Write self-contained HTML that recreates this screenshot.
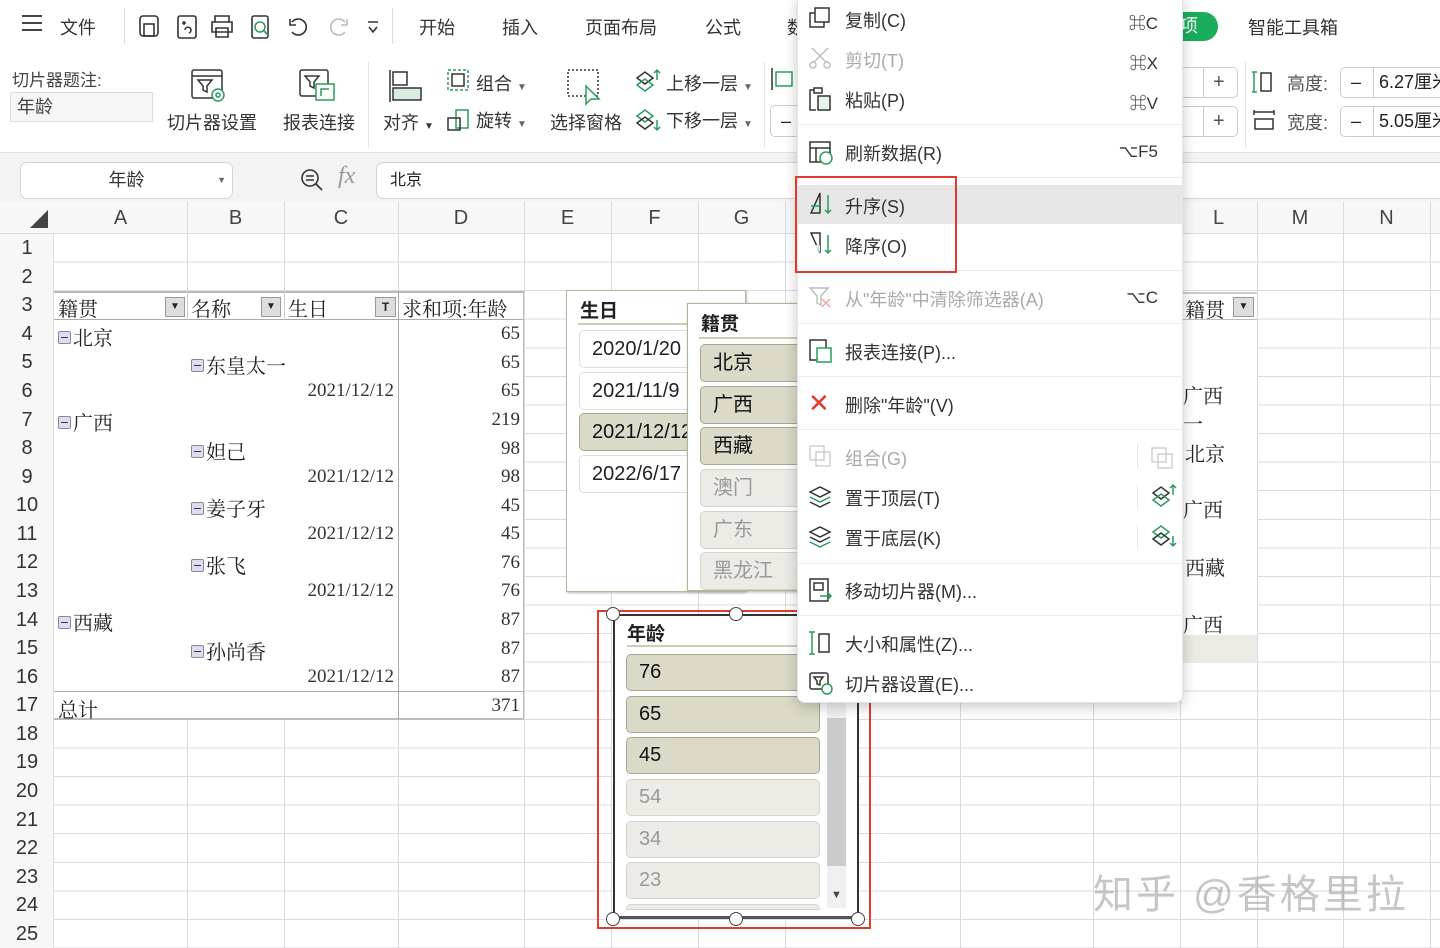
<!DOCTYPE html>
<html><head><meta charset="utf-8"><style>
*{margin:0;padding:0;box-sizing:border-box}
body{width:1440px;height:948px;overflow:hidden;position:relative;background:#fff;font-family:"Liberation Sans","Noto Sans CJK SC",sans-serif;color:#222}
.a{position:absolute;white-space:nowrap}
.t{font-size:18px;color:#333}
.grid{position:absolute;left:54px;top:234px;width:1386px;height:714px;background:repeating-linear-gradient(to bottom,transparent 0,transparent 27.58px,#d8d8e6 27.58px,#d8d8e6 28.58px)}
.vl{position:absolute;top:202px;width:1px;height:746px;background:#d8d8e6}
.rn{position:absolute;left:0;width:54px;text-align:center;font-size:20px;color:#333;height:28.58px;line-height:28.58px}
.ch{position:absolute;top:202px;height:32px;line-height:32px;text-align:center;font-size:20px;color:#444}
.sf{font-family:"Liberation Serif","Noto Serif CJK SC",serif;font-size:20px;color:#222}
.dt{position:absolute;right:1046px;font-family:"Liberation Serif",serif;font-size:19px;color:#333}
.num{position:absolute;right:920px;font-family:"Liberation Serif",serif;font-size:19px;color:#333}
.mi{position:absolute;left:845px;font-size:18px;color:#333}
.dis{color:#aaa}
.sc{position:absolute;right:282px;font-size:17px;color:#333}
.sep{position:absolute;left:797px;width:386px;height:1px;background:#ececec}
.btn{position:absolute;border-radius:5px;font-size:20px;padding-left:12px}
.on{background:#dcd9c8;border:1px solid #a9a690;color:#111}
.off{background:#ecebe5;border:1px solid #d6d4c9;color:#999}
.minus{display:inline-block;width:13px;height:13px;border:1px solid #889;background:#dde;border-radius:2px;vertical-align:1px;margin-right:2px;position:relative}
.minus:after{content:"";position:absolute;left:2px;top:5px;width:7px;height:1px;background:#335}
</style></head><body>

<div class="a" style="left:22px;top:15px;width:20px;height:2px;background:#444;box-shadow:0 7px 0 #444,0 14px 0 #444"></div>
<div class="a t" style="left:60px;top:14px">文件</div>
<div class="a" style="left:124px;top:8px;width:1px;height:36px;background:#ddd"></div>
<svg class="a" style="left:138px;top:14px" width="250" height="26" fill="none" stroke="#333" stroke-width="1.6">
<rect x="2" y="2" width="18" height="20" rx="3"/><rect x="6" y="10" width="10" height="12"/>
<rect x="40" y="2" width="18" height="22" rx="2"/><path d="M44 9h4M46 7v4M47 16a3 3 0 1 1 4 3"/>
<path d="M77 8V2h14v6M74 8h20v10H74zM78 14h12v9H78z"/>
<rect x="114" y="2" width="16" height="22" rx="2"/><circle cx="122" cy="13" r="5" stroke="#2a9d5c"/><path d="M126 17l5 5" stroke="#2a9d5c"/>
<path d="M154 8a8 8 0 1 1 0 10M152 5v6h6"/>
<path d="M207 8a8 8 0 1 0 0 10M209 5v6h-6" stroke="#bbb"/>
<path d="M230 8h10M231 13l4 5 4-5"/>
</svg>
<div class="a" style="left:392px;top:8px;width:1px;height:36px;background:#ddd"></div>
<div class="a t" style="left:419px;top:14px">开始</div>
<div class="a t" style="left:502px;top:14px">插入</div>
<div class="a t" style="left:585px;top:14px">页面布局</div>
<div class="a t" style="left:705px;top:14px">公式</div>
<div class="a t" style="left:787px;top:14px">数</div>
<div class="a" style="left:1160px;top:12px;width:58px;height:29px;border-radius:15px;background:#1aad5c;color:#fff;font-size:18px;padding-left:20px;line-height:29px">项</div>
<div class="a t" style="left:1248px;top:14px">智能工具箱</div>

<div class="a" style="left:12px;top:66px;font-size:17px;color:#444">切片器题注:</div>
<div class="a" style="left:10px;top:92px;width:143px;height:30px;border:1px solid #ddd;background:#f6f6f6;font-size:18px;padding-left:6px;line-height:28px;color:#444">年龄</div>
<svg class="a" style="left:190px;top:68px" width="40" height="36" fill="none" stroke="#333" stroke-width="1.5"><rect x="2" y="2" width="30" height="28" rx="2"/><path d="M2 8h30M8 12h14l-5 6v6l-4-2v-4z"/><circle cx="28" cy="27" r="6" stroke="#2a9d5c" fill="#fff"/><circle cx="28" cy="27" r="2" stroke="#2a9d5c"/></svg>
<div class="a t" style="left:167px;top:109px">切片器设置</div>
<svg class="a" style="left:298px;top:68px" width="40" height="36" fill="none" stroke="#333" stroke-width="1.5"><rect x="2" y="2" width="28" height="26" rx="2"/><path d="M7 8h14l-5 6v6l-4-2v-4z"/><rect x="18" y="16" width="18" height="16" fill="#fff" stroke="#2a9d5c"/><path d="M23 28v-7h8" stroke="#2a9d5c"/></svg>
<div class="a t" style="left:283px;top:109px">报表连接</div>
<div class="a" style="left:368px;top:62px;width:1px;height:86px;background:#e4e4e4"></div>
<svg class="a" style="left:388px;top:68px" width="40" height="36" fill="none" stroke="#333" stroke-width="1.5"><path d="M2 2v32"/><rect x="5" y="4" width="14" height="13"/><rect x="5" y="20" width="28" height="12" fill="#d8eee0" stroke="#333"/></svg>
<div class="a t" style="left:383px;top:109px">对齐 <span style="font-size:10px">▼</span></div>
<svg class="a" style="left:446px;top:68px" width="26" height="26" fill="none" stroke="#2a9d5c" stroke-width="1.5" stroke-dasharray="3 2"><rect x="2" y="2" width="20" height="20"/><rect x="6" y="6" width="12" height="12" stroke="#333" stroke-dasharray="0"/></svg>
<div class="a t" style="left:476px;top:70px">组合 <span style="font-size:10px;color:#666">▼</span></div>
<svg class="a" style="left:446px;top:106px" width="26" height="26" fill="none" stroke="#333" stroke-width="1.5"><rect x="10" y="4" width="12" height="18" stroke="#2a9d5c"/><rect x="2" y="12" width="12" height="12"/></svg>
<div class="a t" style="left:476px;top:107px">旋转 <span style="font-size:10px;color:#666">▼</span></div>
<svg class="a" style="left:566px;top:68px" width="40" height="40" fill="none" stroke="#333" stroke-width="1.5"><rect x="2" y="2" width="30" height="26" stroke-dasharray="2 2"/><path d="M20 18l0 18 5-5 8 0z" fill="#fff" stroke="#2a9d5c"/></svg>
<div class="a t" style="left:550px;top:109px">选择窗格</div>
<svg class="a" style="left:634px;top:68px" width="28" height="26" fill="none" stroke-width="1.5"><path d="M3 10l8-6 8 6-8 6z" stroke="#333"/><path d="M3 17l8-6 8 6-8 6z" stroke="#2a9d5c"/><path d="M23 2v10M20 5l3-3 3 3" stroke="#2a9d5c"/></svg>
<div class="a t" style="left:666px;top:70px">上移一层 <span style="font-size:10px;color:#666">▼</span></div>
<svg class="a" style="left:634px;top:106px" width="28" height="28" fill="none" stroke-width="1.5"><path d="M3 10l8-6 8 6-8 6z" stroke="#2a9d5c"/><path d="M3 17l8-6 8 6-8 6z" stroke="#333"/><path d="M23 14v10M20 21l3 3 3-3" stroke="#2a9d5c"/></svg>
<div class="a t" style="left:666px;top:107px">下移一层 <span style="font-size:10px;color:#666">▼</span></div>
<div class="a" style="left:764px;top:62px;width:1px;height:86px;background:#e4e4e4"></div>
<svg class="a" style="left:770px;top:66px" width="26" height="26" fill="none" stroke="#333" stroke-width="1.5"><path d="M2 2v22"/><rect x="6" y="6" width="16" height="14" stroke="#2a9d5c"/></svg>
<div class="a" style="left:770px;top:105px;width:30px;height:32px;border:1px solid #ccc;border-radius:5px;font-size:18px;padding-left:10px;line-height:30px">–</div>

<div class="a" style="left:1183px;top:67px;width:55px;height:31px;border:1px solid #ccc;border-left:none;border-radius:0 5px 5px 0;font-size:20px;line-height:29px;padding-left:30px;color:#555">+</div>
<div class="a" style="left:1203px;top:67px;width:1px;height:31px;background:#ccc"></div>
<div class="a" style="left:1183px;top:106px;width:55px;height:31px;border:1px solid #ccc;border-left:none;border-radius:0 5px 5px 0;font-size:20px;line-height:29px;padding-left:30px;color:#555">+</div>
<div class="a" style="left:1203px;top:106px;width:1px;height:31px;background:#ccc"></div>
<div class="a" style="left:1245px;top:62px;width:1px;height:86px;background:#e4e4e4"></div>
<svg class="a" style="left:1252px;top:70px" width="24" height="24" fill="none" stroke-width="1.5"><path d="M2 2v20M0 2h5M0 22h5" stroke="#2a9d5c"/><rect x="9" y="3" width="10" height="18" stroke="#333"/></svg>
<div class="a t" style="left:1287px;top:70px;color:#555">高度:</div>
<svg class="a" style="left:1252px;top:110px" width="24" height="24" fill="none" stroke-width="1.5"><path d="M2 2h20M2 0v5M22 0v5" stroke="#333"/><rect x="3" y="9" width="18" height="10" stroke="#333"/></svg>
<div class="a t" style="left:1287px;top:109px;color:#555">宽度:</div>
<div class="a" style="left:1340px;top:67px;width:110px;height:31px;border:1px solid #ccc;border-radius:5px;font-size:18px;line-height:29px;padding-left:10px">–<span style="position:absolute;left:32px;top:0;height:29px;border-left:1px solid #ccc;padding-left:5px">6.27厘米</span></div>
<div class="a" style="left:1340px;top:106px;width:110px;height:31px;border:1px solid #ccc;border-radius:5px;font-size:18px;line-height:29px;padding-left:10px">–<span style="position:absolute;left:32px;top:0;height:29px;border-left:1px solid #ccc;padding-left:5px">5.05厘米</span></div>

<div class="a" style="left:0;top:152px;width:1440px;height:50px;background:#f3f3f3;border-top:1px solid #e2e2e2"></div>
<div class="a" style="left:20px;top:162px;width:213px;height:37px;border:1px solid #d4d4d4;border-radius:7px;background:#fff;font-size:18px;line-height:35px;text-align:center;color:#333">年龄<span style="position:absolute;right:6px;font-size:9px;color:#666">▼</span></div>
<svg class="a" style="left:299px;top:167px" width="26" height="26" fill="none" stroke="#333" stroke-width="1.6"><circle cx="11" cy="11" r="8"/><path d="M7 9h8M7 13h8M17 17l6 6"/></svg>
<div class="a" style="left:338px;top:163px;font-family:'Liberation Serif',serif;font-style:italic;font-size:24px;color:#999">fx</div>
<div class="a" style="left:376px;top:162px;width:1100px;height:37px;border:1px solid #d4d4d4;border-radius:7px;background:#fff;font-size:16px;line-height:35px;padding-left:13px;color:#222">北京</div>

<div class="a" style="left:0;top:202px;width:1440px;height:32px;background:#f7f7f7;border-bottom:1px solid #ddd"></div>
<div class="a" style="left:30px;top:210px;width:0;height:0;border-left:18px solid transparent;border-bottom:18px solid #444"></div>
<div class="grid"></div>
<div class="a" style="left:0;top:234px;width:54px;height:714px;background:#f7f7f7;border-right:1px solid #ddd"></div>
<div class="vl" style="left:187px"></div><div class="vl" style="left:284px"></div><div class="vl" style="left:398px"></div><div class="vl" style="left:524px"></div><div class="vl" style="left:611px"></div><div class="vl" style="left:698px"></div><div class="vl" style="left:785px"></div><div class="vl" style="left:960px"></div><div class="vl" style="left:1093px"></div><div class="vl" style="left:1180px"></div><div class="vl" style="left:1257px"></div><div class="vl" style="left:1343px"></div><div class="vl" style="left:1430px"></div>
<div class="ch" style="left:54px;width:133px">A</div><div class="ch" style="left:187px;width:97px">B</div><div class="ch" style="left:284px;width:114px">C</div><div class="ch" style="left:398px;width:126px">D</div><div class="ch" style="left:524px;width:87px">E</div><div class="ch" style="left:611px;width:87px">F</div><div class="ch" style="left:698px;width:87px">G</div><div class="ch" style="left:1180px;width:77px">L</div><div class="ch" style="left:1257px;width:86px">M</div><div class="ch" style="left:1343px;width:87px">N</div>

<div class="rn" style="top:234px">1</div><div class="rn" style="top:262.6px">2</div><div class="rn" style="top:291.2px">3</div><div class="rn" style="top:319.7px">4</div><div class="rn" style="top:348.3px">5</div><div class="rn" style="top:376.9px">6</div><div class="rn" style="top:405.5px">7</div><div class="rn" style="top:434.1px">8</div><div class="rn" style="top:462.6px">9</div><div class="rn" style="top:491.2px">10</div><div class="rn" style="top:519.8px">11</div><div class="rn" style="top:548.4px">12</div><div class="rn" style="top:577px">13</div><div class="rn" style="top:605.5px">14</div><div class="rn" style="top:634.1px">15</div><div class="rn" style="top:662.7px">16</div><div class="rn" style="top:691.3px">17</div><div class="rn" style="top:719.9px">18</div><div class="rn" style="top:748.4px">19</div><div class="rn" style="top:777px">20</div><div class="rn" style="top:805.6px">21</div><div class="rn" style="top:834.2px">22</div><div class="rn" style="top:862.8px">23</div><div class="rn" style="top:891.3px">24</div><div class="rn" style="top:919.9px">25</div>

<div class="a" style="left:54px;top:291px;width:470px;height:429px;background:#fff;border-top:2px solid #bbb;border-bottom:2px solid #bbb;border-right:1px solid #bbb"></div>
<div class="a" style="left:54px;top:319px;width:470px;height:1px;background:#aaa"></div>
<div class="a" style="left:54px;top:691px;width:470px;height:1px;background:#aaa"></div>
<div class="a" style="left:398px;top:291px;width:1px;height:429px;background:#aaa"></div>
<div class="a" style="left:187px;top:291px;width:1px;height:29px;background:#ccc"></div>
<div class="a" style="left:284px;top:291px;width:1px;height:29px;background:#ccc"></div>
<div class="a sf" style="left:58px;top:293px">籍贯</div>
<div class="a" style="left:165px;top:297px;width:20px;height:20px;border:1px solid #999;background:#ddd;font-size:10px;text-align:center;line-height:18px">▼</div>
<div class="a sf" style="left:191px;top:293px">名称</div>
<div class="a" style="left:261px;top:297px;width:20px;height:20px;border:1px solid #999;background:#ddd;font-size:10px;text-align:center;line-height:18px">▼</div>
<div class="a sf" style="left:288px;top:293px">生日</div>
<div class="a" style="left:375px;top:297px;width:21px;height:20px;border:1px solid #999;background:#ddd;font-size:12px;text-align:center;line-height:18px;font-weight:bold">T</div>
<div class="a sf" style="left:402px;top:293px">求和项:年龄</div>
<div class="a sf" style="left:58px;top:322px"><span class="minus"></span>北京</div>
<div class="a sf" style="left:191px;top:350px"><span class="minus"></span>东皇太一</div>
<div class="dt" style="top:380px">2021/12/12</div>
<div class="a sf" style="left:58px;top:407px"><span class="minus"></span>广西</div>
<div class="a sf" style="left:191px;top:436px"><span class="minus"></span>妲己</div>
<div class="dt" style="top:466px">2021/12/12</div>
<div class="a sf" style="left:191px;top:493px"><span class="minus"></span>姜子牙</div>
<div class="dt" style="top:523px">2021/12/12</div>
<div class="a sf" style="left:191px;top:550px"><span class="minus"></span>张飞</div>
<div class="dt" style="top:580px">2021/12/12</div>
<div class="a sf" style="left:58px;top:607px"><span class="minus"></span>西藏</div>
<div class="a sf" style="left:191px;top:636px"><span class="minus"></span>孙尚香</div>
<div class="dt" style="top:666px">2021/12/12</div>
<div class="a sf" style="left:58px;top:694px">总计</div>
<div class="num" style="top:323px">65</div><div class="num" style="top:352px">65</div><div class="num" style="top:380px">65</div><div class="num" style="top:409px">219</div><div class="num" style="top:438px">98</div><div class="num" style="top:466px">98</div><div class="num" style="top:495px">45</div><div class="num" style="top:523px">45</div><div class="num" style="top:552px">76</div><div class="num" style="top:580px">76</div><div class="num" style="top:609px">87</div><div class="num" style="top:638px">87</div><div class="num" style="top:666px">87</div><div class="num" style="top:695px">371</div>

<div class="a" style="left:1180px;top:292px;width:77px;height:370px;background:#fff;border-top:2px solid #ccc"></div>
<div class="a" style="left:1180px;top:319px;width:77px;height:1px;background:#bbb"></div>
<div class="a" style="left:1180px;top:635px;width:77px;height:27px;background:#ebebe3"></div>
<div class="a sf" style="left:1185px;top:294px">籍贯</div>
<div class="a" style="left:1233px;top:297px;width:21px;height:20px;border:1px solid #999;background:#ddd;font-size:10px;text-align:center;line-height:18px">▼</div>
<div class="a sf" style="left:1183px;top:380px">广西</div>
<div class="a sf" style="left:1183px;top:408px">一</div>
<div class="a sf" style="left:1185px;top:438px">北京</div>
<div class="a sf" style="left:1183px;top:494px">广西</div>
<div class="a sf" style="left:1185px;top:552px">西藏</div>
<div class="a sf" style="left:1183px;top:609px">广西</div>

<div class="a" style="left:566px;top:290px;width:180px;height:302px;background:#fff;border:1px solid #b8b49a;box-shadow:1px 1px 2px #bbb"></div>
<div class="a" style="left:580px;top:296px;font-size:19px;font-weight:bold;color:#222">生日</div>
<div class="a" style="left:578px;top:323px;width:150px;height:2px;background:#cfcbb5"></div>
<div class="btn" style="left:579px;top:330px;width:140px;height:38px;border:1px solid #ddd;line-height:36px;background:#fff">2020/1/20</div>
<div class="btn" style="left:579px;top:372px;width:140px;height:38px;border:1px solid #ddd;line-height:36px;background:#fff">2021/11/9</div>
<div class="btn on" style="left:579px;top:413px;width:140px;height:38px;line-height:36px">2021/12/12</div>
<div class="btn" style="left:579px;top:455px;width:140px;height:38px;border:1px solid #ddd;line-height:36px;background:#fff">2022/6/17</div>

<div class="a" style="left:687px;top:303px;width:130px;height:288px;background:#fff;border:1px solid #b8b49a;box-shadow:1px 1px 3px #aaa"></div>
<div class="a" style="left:701px;top:309px;font-size:19px;font-weight:bold;color:#222">籍贯</div>
<div class="a" style="left:699px;top:337px;width:110px;height:2px;background:#cfcbb5"></div>
<div class="btn on" style="left:700px;top:344px;width:120px;height:38px;line-height:36px">北京</div>
<div class="btn on" style="left:700px;top:386px;width:120px;height:38px;line-height:36px">广西</div>
<div class="btn on" style="left:700px;top:427px;width:120px;height:38px;line-height:36px">西藏</div>
<div class="btn off" style="left:700px;top:469px;width:120px;height:38px;line-height:36px">澳门</div>
<div class="btn off" style="left:700px;top:511px;width:120px;height:38px;line-height:36px">广东</div>
<div class="btn off" style="left:700px;top:552px;width:120px;height:38px;line-height:36px">黑龙江</div>

<div class="a" style="left:613px;top:614px;width:246px;height:305px;background:#fff;border:2px solid #333;border-bottom:3px solid #555"></div>
<div class="a" style="left:627px;top:619px;font-size:19px;font-weight:bold;color:#222">年龄</div>
<div class="a" style="left:627px;top:645px;width:200px;height:2px;background:#cfcbb5"></div>
<div class="btn on" style="left:626px;top:654px;width:194px;height:37px;line-height:35px">76</div>
<div class="btn on" style="left:626px;top:696px;width:194px;height:37px;line-height:35px">65</div>
<div class="btn on" style="left:626px;top:737px;width:194px;height:37px;line-height:35px">45</div>
<div class="btn off" style="left:626px;top:779px;width:194px;height:37px;line-height:35px">54</div>
<div class="btn off" style="left:626px;top:821px;width:194px;height:37px;line-height:35px">34</div>
<div class="btn off" style="left:626px;top:862px;width:194px;height:37px;line-height:35px">23</div>
<div class="a off" style="left:626px;top:904px;width:194px;height:6px;border-radius:5px 5px 0 0"></div>
<div class="a" style="left:827px;top:690px;width:19px;height:218px;background:#f0f0f0"></div>
<div class="a" style="left:827px;top:718px;width:19px;height:148px;background:#ccc"></div>
<div class="a" style="left:831px;top:889px;font-size:11px;color:#444">▼</div>
<div class="a" style="left:597px;top:610px;width:274px;height:319px;border:2px solid #e03c2d"></div>
<div class="a" style="left:606px;top:607px;width:14px;height:14px;border:1px solid #444;border-radius:50%;background:#fff"></div>
<div class="a" style="left:729px;top:607px;width:14px;height:14px;border:1px solid #444;border-radius:50%;background:#fff"></div>
<div class="a" style="left:606px;top:912px;width:14px;height:14px;border:1px solid #444;border-radius:50%;background:#fff"></div>
<div class="a" style="left:729px;top:912px;width:14px;height:14px;border:1px solid #444;border-radius:50%;background:#fff"></div>
<div class="a" style="left:851px;top:912px;width:14px;height:14px;border:1px solid #444;border-radius:50%;background:#fff"></div>

<div class="a" style="left:797px;top:-6px;width:386px;height:709px;background:#fff;border-radius:8px;box-shadow:0 4px 14px rgba(0,0,0,.22);border:1px solid #e4e4e4"></div>
<div class="a" style="left:797px;top:185px;width:386px;height:39px;background:#e6e6e6"></div>
<svg class="a" style="left:808px;top:6px" width="24" height="24" fill="none" stroke="#333" stroke-width="1.5"><rect x="7" y="2" width="14" height="14"/><path d="M7 7H2v14h14v-5"/></svg>
<div class="mi" style="top:7px">复制(C)</div><div class="sc" style="top:9px">⌘C</div>
<svg class="a" style="left:808px;top:46px" width="24" height="24" fill="none" stroke="#bbb" stroke-width="1.4"><path d="M4 2l14 14M20 2L6 16"/><circle cx="5" cy="19" r="3"/><circle cx="19" cy="19" r="3"/></svg>
<div class="mi dis" style="top:47px">剪切(T)</div><div class="sc dis" style="top:49px">⌘X</div>
<svg class="a" style="left:808px;top:86px" width="24" height="26" fill="none" stroke="#333" stroke-width="1.5"><path d="M6 4H2v20h6M6 2h8v5H6z"/><rect x="10" y="10" width="12" height="14" fill="#e7f4ec" stroke="#333"/></svg>
<div class="mi" style="top:87px">粘贴(P)</div><div class="sc" style="top:89px">⌘V</div>
<div class="sep" style="top:124px"></div>
<svg class="a" style="left:808px;top:140px" width="26" height="26" fill="none" stroke="#333" stroke-width="1.5"><rect x="2" y="2" width="20" height="20"/><path d="M2 8h20M8 8v14"/><circle cx="18" cy="18" r="6" fill="#fff" stroke="#2a9d5c"/></svg>
<div class="mi" style="top:140px">刷新数据(R)</div><div class="sc" style="top:142px">⌥F5</div>
<div class="sep" style="top:177px"></div>
<svg class="a" style="left:808px;top:191px" width="26" height="26" fill="none" stroke-width="1.5"><path d="M3 22L12 2v20z" fill="#cfe9da" stroke="#333"/><path d="M3 15h9M20 4v18M17 19l3 3 3-3" stroke="#2a9d5c"/></svg>
<div class="mi" style="top:193px">升序(S)</div>
<svg class="a" style="left:808px;top:231px" width="26" height="26" fill="none" stroke-width="1.5"><path d="M3 2h9v20z" stroke="#333"/><path d="M7 14h5v8z" fill="#cfe9da"/><path d="M20 4v18M17 19l3 3 3-3" stroke="#2a9d5c"/></svg>
<div class="mi" style="top:233px">降序(O)</div>
<div class="a" style="left:795px;top:176px;width:162px;height:97px;border:2px solid #e03c2d"></div>
<div class="sep" style="top:270px;left:957px;width:226px"></div>
<svg class="a" style="left:808px;top:285px" width="26" height="26" fill="none" stroke="#bbb" stroke-width="1.4"><path d="M2 3h18l-7 8v9l-4-2v-7z"/><path d="M14 14l8 8M22 14l-8 8" stroke="#f0a0a0"/></svg>
<div class="mi dis" style="top:286px">从"年龄"中清除筛选器(A)</div><div class="sc dis" style="top:288px">⌥C</div>
<div class="sep" style="top:323px"></div>
<svg class="a" style="left:808px;top:338px" width="26" height="26" fill="none" stroke="#333" stroke-width="1.5"><rect x="2" y="2" width="16" height="20"/><rect x="9" y="10" width="14" height="14" fill="#fff" stroke="#2a9d5c"/></svg>
<div class="mi" style="top:339px">报表连接(P)...</div>
<div class="sep" style="top:376px"></div>
<div class="a" style="left:808px;top:388px;font-size:26px;color:#e03c2d;line-height:30px">✕</div>
<div class="mi" style="top:392px">删除"年龄"(V)</div>
<div class="sep" style="top:429px"></div>
<svg class="a" style="left:808px;top:444px" width="26" height="26" fill="none" stroke="#ccc" stroke-width="1.4"><rect x="2" y="2" width="14" height="14"/><rect x="8" y="8" width="14" height="14"/></svg>
<div class="mi dis" style="top:445px">组合(G)</div>
<svg class="a" style="left:1150px;top:444px" width="26" height="26" fill="none" stroke="#ccc" stroke-width="1.4"><rect x="2" y="4" width="14" height="14"/><rect x="8" y="10" width="14" height="14"/></svg>
<svg class="a" style="left:808px;top:485px" width="26" height="26" fill="none" stroke-width="1.5"><path d="M2 7l10-5 10 5-10 5z" stroke="#333"/><path d="M2 12l10 5 10-5" stroke="#2a9d5c"/><path d="M2 17l10 5 10-5" stroke="#333"/></svg>
<div class="mi" style="top:485px">置于顶层(T)</div>
<svg class="a" style="left:1150px;top:483px" width="28" height="28" fill="none" stroke-width="1.5"><path d="M3 10l8-6 8 6-8 6z" stroke="#333"/><path d="M3 17l8-6 8 6-8 6z" stroke="#2a9d5c"/><path d="M23 2v10M20 5l3-3 3 3" stroke="#2a9d5c"/></svg>
<svg class="a" style="left:808px;top:525px" width="26" height="26" fill="none" stroke-width="1.5"><path d="M2 7l10-5 10 5-10 5z" stroke="#333"/><path d="M2 12l10 5 10-5" stroke="#333"/><path d="M2 17l10 5 10-5" stroke="#2a9d5c"/></svg>
<div class="mi" style="top:525px">置于底层(K)</div>
<svg class="a" style="left:1150px;top:522px" width="28" height="28" fill="none" stroke-width="1.5"><path d="M3 10l8-6 8 6-8 6z" stroke="#2a9d5c"/><path d="M3 17l8-6 8 6-8 6z" stroke="#333"/><path d="M23 14v10M20 21l3 3 3-3" stroke="#2a9d5c"/></svg>
<div class="a" style="left:1137px;top:444px;width:1px;height:24px;background:#e6e6e6"></div>
<div class="a" style="left:1137px;top:485px;width:1px;height:24px;background:#e6e6e6"></div>
<div class="a" style="left:1137px;top:525px;width:1px;height:24px;background:#e6e6e6"></div>
<div class="sep" style="top:563px"></div>
<svg class="a" style="left:808px;top:577px" width="26" height="26" fill="none" stroke="#333" stroke-width="1.5"><rect x="2" y="2" width="18" height="22"/><rect x="6" y="6" width="9" height="7"/><path d="M12 19h11M19 15l4 4-4 4" stroke="#2a9d5c"/></svg>
<div class="mi" style="top:578px">移动切片器(M)...</div>
<div class="sep" style="top:615px"></div>
<svg class="a" style="left:808px;top:630px" width="26" height="26" fill="none" stroke-width="1.5"><path d="M4 2v22M1 2h6M1 24h6" stroke="#2a9d5c"/><rect x="11" y="4" width="10" height="18" stroke="#333"/></svg>
<div class="mi" style="top:631px">大小和属性(Z)...</div>
<svg class="a" style="left:808px;top:670px" width="26" height="26" fill="none" stroke="#333" stroke-width="1.5"><rect x="2" y="3" width="18" height="16" rx="2"/><path d="M6 7h9l-3 4v4l-3-1v-3z"/><circle cx="19" cy="19" r="5" fill="#fff" stroke="#2a9d5c"/></svg>
<div class="mi" style="top:671px">切片器设置(E)...</div>

<div class="a" style="left:1093px;top:862px;font-size:40px;color:rgba(160,160,160,.6);letter-spacing:3px">知乎 @香格里拉</div>
</body></html>
